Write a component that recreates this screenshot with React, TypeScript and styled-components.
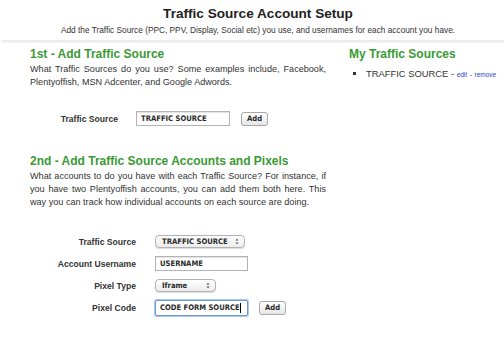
import React from 'react';
import styled, { createGlobalStyle } from 'styled-components';

const GlobalStyle = createGlobalStyle`
  html, body {
    margin: 0;
    padding: 0;
    background: #fff;
  }
  body {
    font-family: "Liberation Sans", Arial, sans-serif;
    color: #333;
  }
`;

const Page = styled.div`
  width: 504px;
  height: 348px;
  overflow: hidden;
  background: #fff;
`;

const Header = styled.header`
  display: flex;
  flex-direction: column;
  align-items: center;
  padding-top: 5px;
  padding-left: 10px;
  height: 35px;
  border-bottom: 2px solid #ececec;
  margin-left: 2px;
  box-shadow: 0 1px 1px #f6f6f6;
`;

const Title = styled.h1`
  margin: 0;
  font-size: 13.6px;
  font-weight: bold;
  color: #222;
  line-height: 17px;
`;

const Subtitle = styled.p`
  margin: 3px 0 0;
  font-size: 8.3px;
  color: #333;
`;

const Main = styled.div`
  display: flex;
  padding-top: 5px;
`;

const LeftCol = styled.section`
  width: 296px;
  padding-left: 30px;
`;

const RightCol = styled.aside`
  padding-left: 23px;
`;

const Heading = styled.h2<{ mt?: number }>`
  margin: ${({ mt }) => mt ?? 0}px 0 0;
  font-size: 12px;
  font-weight: bold;
  color: #3a9a35;
  line-height: 15px;
`;

const Para = styled.p`
  margin: 1px 0 0;
  font-size: 9.1px;
  line-height: 13px;
  text-align: justify;
  color: #333;
`;

const FormGrid = styled.div<{ labelWidth: number; gap: number; mt: number }>`
  display: grid;
  grid-template-columns: ${({ labelWidth }) => labelWidth}px auto;
  column-gap: ${({ gap }) => gap}px;
  row-gap: 7px;
  align-items: center;
  margin-top: ${({ mt }) => mt}px;
`;

const Label = styled.label`
  text-align: right;
  font-size: 8.6px;
  font-weight: bold;
  color: #333;
`;

const Controls = styled.div`
  display: flex;
  align-items: center;
  gap: 11px;
  height: 15px;
`;

const TextBox = styled.div<{ w: number; focused?: boolean }>`
  box-sizing: border-box;
  width: ${({ w }) => w}px;
  height: ${({ focused }) => (focused ? 16 : 15)}px;
  border: 1px solid ${({ focused }) => (focused ? '#6d9ad6' : '#b4b4b4')};
  box-shadow: ${({ focused }) =>
    focused ? '0 0 0 1px #a9c6ef' : 'inset 0 1px 1px #e2e2e2'};
  border-radius: ${({ focused }) => (focused ? 2 : 0)}px;
  background: #fff;
  padding-left: 4px;
  display: flex;
  align-items: center;
  font-family: "DejaVu Sans Condensed", "DejaVu Sans", sans-serif;
  font-size: 7.6px;
  font-weight: bold;
  color: #2a2a2a;
`;

const Caret = styled.span`
  display: inline-block;
  width: 1px;
  height: 10px;
  background: #000;
  margin-left: 0.5px;
`;

const SelectBox = styled.div<{ w: number }>`
  box-sizing: border-box;
  width: ${({ w }) => w}px;
  height: 13px;
  border: 1px solid #b2b2b2;
  border-radius: 4px;
  background: linear-gradient(#ffffff, #ececec);
  box-shadow: 0 1px 1px #dcdcdc;
  padding: 0 5px 0 6px;
  display: flex;
  align-items: center;
  justify-content: space-between;
  font-family: "DejaVu Sans Condensed", "DejaVu Sans", sans-serif;
  font-size: 7.6px;
  font-weight: bold;
  color: #2a2a2a;
`;

const Button = styled.button`
  box-sizing: border-box;
  height: 14px;
  padding: 0 5px;
  border: 1px solid #a8a8a8;
  border-radius: 3px;
  background: linear-gradient(#ffffff, #e6e6e6);
  font-family: "DejaVu Sans Condensed", "DejaVu Sans", sans-serif;
  font-size: 7.6px;
  font-weight: bold;
  color: #2a2a2a;
  line-height: 12px;
`;

const SourceList = styled.ul`
  margin: 6px 0 0;
  padding-left: 17px;
  font-size: 9.4px;
  color: #333;
  li {
    list-style: square;
  }
`;

const SmallLink = styled.a`
  font-size: 6.5px;
  color: #2b3fc8;
  text-decoration: none;
`;

const Dash = styled.span`
  font-size: 6.5px;
  color: #333;
`;

const Arrows = () => (
  <svg width="4" height="7" viewBox="0 0 4 7">
    <path d="M0.5 2.6 L2 0.8 L3.5 2.6 Z" fill="#444" />
    <path d="M0.5 4.4 L2 6.2 L3.5 4.4 Z" fill="#444" />
  </svg>
);

const App: React.FC = () => (
  <Page>
    <GlobalStyle />
    <Header>
      <Title>Traffic Source Account Setup</Title>
      <Subtitle>
        Add the Traffic Source (PPC, PPV, Display, Social etc) you use, and usernames for each account you have.
      </Subtitle>
    </Header>
    <Main>
      <LeftCol>
        <Heading>1st - Add Traffic Source</Heading>
        <Para>
          What Traffic Sources do you use? Some examples include, Facebook, Plentyoffish, MSN Adcenter, and Google Adwords.
        </Para>
        <FormGrid labelWidth={88} gap={18} mt={22}>
          <Label>Traffic Source</Label>
          <Controls>
            <TextBox w={94}>TRAFFIC SOURCE</TextBox>
            <Button>Add</Button>
          </Controls>
        </FormGrid>

        <Heading mt={28}>2nd - Add Traffic Source Accounts and Pixels</Heading>
        <Para>
          What accounts to do you have with each Traffic Source? For instance, if you have two Plentyoffish accounts, you can add them both here. This way you can track how individual accounts on each source are doing.
        </Para>
        <FormGrid labelWidth={106} gap={19} mt={25}>
          <Label>Traffic Source</Label>
          <Controls>
            <SelectBox w={90}>
              TRAFFIC SOURCE <Arrows />
            </SelectBox>
          </Controls>
          <Label>Account Username</Label>
          <Controls>
            <TextBox w={93}>USERNAME</TextBox>
          </Controls>
          <Label>Pixel Type</Label>
          <Controls>
            <SelectBox w={61}>
              Iframe <Arrows />
            </SelectBox>
          </Controls>
          <Label>Pixel Code</Label>
          <Controls>
            <TextBox w={93} focused>
              CODE FORM SOURCE<Caret />
            </TextBox>
            <Button>Add</Button>
          </Controls>
        </FormGrid>
      </LeftCol>
      <RightCol>
        <Heading>My Traffic Sources</Heading>
        <SourceList>
          <li>
            TRAFFIC SOURCE - <SmallLink href="#">edit</SmallLink> <Dash>-</Dash>{' '}
            <SmallLink href="#">remove</SmallLink>
          </li>
        </SourceList>
      </RightCol>
    </Main>
  </Page>
);

export default App;
